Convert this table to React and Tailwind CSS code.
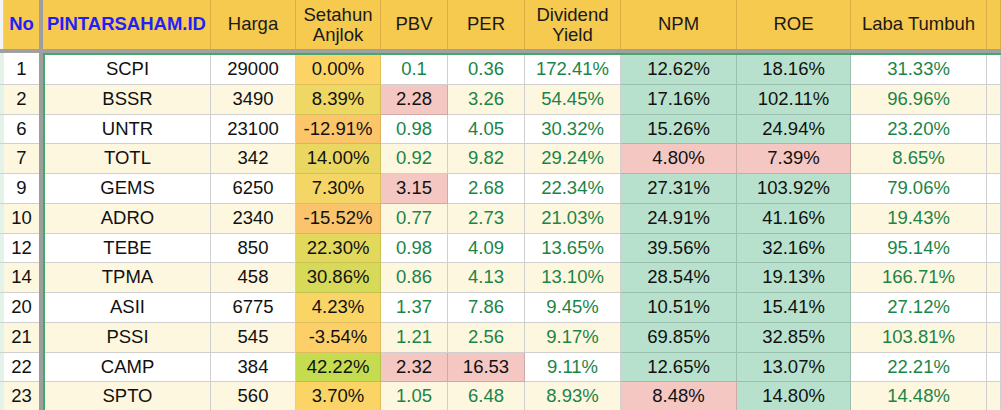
import React from 'react';

const rows = [
  { no: 1, code: 'SCPI', harga: '29000', anjlok: '0.00%', anjlokBg: 'bg-[#fcd466]', pbv: '0.1', per: '0.36', dy: '172.41%', npm: '12.62%', roe: '18.16%', laba: '31.33%' },
  { no: 2, code: 'BSSR', harga: '3490', anjlok: '8.39%', anjlokBg: 'bg-[#efd763]', pbv: '2.28', pbvBad: true, per: '3.26', dy: '54.45%', npm: '17.16%', roe: '102.11%', laba: '96.96%' },
  { no: 6, code: 'UNTR', harga: '23100', anjlok: '-12.91%', anjlokBg: 'bg-[#fbc66a]', pbv: '0.98', per: '4.05', dy: '30.32%', npm: '15.26%', roe: '24.94%', laba: '23.20%' },
  { no: 7, code: 'TOTL', harga: '342', anjlok: '14.00%', anjlokBg: 'bg-[#ead762]', pbv: '0.92', per: '9.82', dy: '29.24%', npm: '4.80%', npmBad: true, roe: '7.39%', roeBad: true, laba: '8.65%' },
  { no: 9, code: 'GEMS', harga: '6250', anjlok: '7.30%', anjlokBg: 'bg-[#f3d665]', pbv: '3.15', pbvBad: true, per: '2.68', dy: '22.34%', npm: '27.31%', roe: '103.92%', laba: '79.06%' },
  { no: 10, code: 'ADRO', harga: '2340', anjlok: '-15.52%', anjlokBg: 'bg-[#f9c46c]', pbv: '0.77', per: '2.73', dy: '21.03%', npm: '24.91%', roe: '41.16%', laba: '19.43%' },
  { no: 12, code: 'TEBE', harga: '850', anjlok: '22.30%', anjlokBg: 'bg-[#e2d85c]', pbv: '0.98', per: '4.09', dy: '13.65%', npm: '39.56%', roe: '32.16%', laba: '95.14%' },
  { no: 14, code: 'TPMA', harga: '458', anjlok: '30.86%', anjlokBg: 'bg-[#d7d958]', pbv: '0.86', per: '4.13', dy: '13.10%', npm: '28.54%', roe: '19.13%', laba: '166.71%' },
  { no: 20, code: 'ASII', harga: '6775', anjlok: '4.23%', anjlokBg: 'bg-[#f9d566]', pbv: '1.37', per: '7.86', dy: '9.45%', npm: '10.51%', roe: '15.41%', laba: '27.12%' },
  { no: 21, code: 'PSSI', harga: '545', anjlok: '-3.54%', anjlokBg: 'bg-[#fccf68]', pbv: '1.21', per: '2.56', dy: '9.17%', npm: '69.85%', roe: '32.85%', laba: '103.81%' },
  { no: 22, code: 'CAMP', harga: '384', anjlok: '42.22%', anjlokBg: 'bg-[#c6dc50]', pbv: '2.32', pbvBad: true, per: '16.53', perBad: true, dy: '9.11%', npm: '12.65%', roe: '13.07%', laba: '22.21%' },
  { no: 23, code: 'SPTO', harga: '560', anjlok: '3.70%', anjlokBg: 'bg-[#fad566]', pbv: '1.05', per: '6.48', dy: '8.93%', npm: '8.48%', npmBad: true, roe: '14.80%', laba: '14.48%' },
];

const headers = [
  { label: 'PINTARSAHAM.ID', w: 'w-[168px]', blue: true },
  { label: 'Harga', w: 'w-[85px]' },
  { label: ['Setahun', 'Anjlok'], w: 'w-[85px]' },
  { label: 'PBV', w: 'w-[67px]' },
  { label: 'PER', w: 'w-[77px]' },
  { label: ['Dividend', 'Yield'], w: 'w-[96px]' },
  { label: 'NPM', w: 'w-[116px]' },
  { label: 'ROE', w: 'w-[114px]' },
  { label: 'Laba Tumbuh', w: 'w-[136px]' },
  { label: '', w: 'flex-1' },
];

const GREEN = 'text-[#1b8447]';
const PINK = 'bg-[#f4c7c3] border-black/15';
const MINT = 'bg-[#b7e1cd] border-black/15';

function Cell({ w, bg, color = 'text-[#111]', children, h = 'h-[29.75px]' }) {
  return (
    <div className={`${w} ${h} shrink-0 flex items-center justify-center border-r border-b whitespace-nowrap ${bg} ${color}`}>
      {children}
    </div>
  );
}

export default function App() {
  return (
    <div
      className="w-[1001px] h-[410px] overflow-hidden bg-white text-[18.5px] leading-none"
      style={{ fontFamily: '"Liberation Sans", Arial, sans-serif' }}
    >
      {/* header row */}
      <div className="flex h-[49px]">
        <div className="w-[4px] bg-[#f3f3f3] border-r border-[#d0d0d0]" />
        <div className="w-[35px] bg-[#f6c94f] flex items-center justify-center font-bold text-[#1f1fff]">No</div>
        <div className="w-[4px] bg-[#9e9e9e]" />
        {headers.map((h, i) => (
          <div
            key={i}
            className={`${h.w} shrink-0 bg-[#f6c94f] border-r border-[#d9ae44] flex flex-col items-center justify-center text-center whitespace-nowrap ${
              h.blue ? 'font-bold text-[#1f1fff]' : 'text-[#1a1a1a]'
            }`}
          >
            {Array.isArray(h.label) ? (
              <>
                <span className="leading-[20px]">{h.label[0]}</span>
                <span className="leading-[20px]">{h.label[1]}</span>
              </>
            ) : (
              h.label
            )}
          </div>
        ))}
      </div>
      <div className="h-[4px] bg-[#a0a0a0]" />

      {/* body */}
      <div className="flex">
        <div className="w-[4px] shrink-0 flex flex-col">
          {rows.map((r, i) => (
            <div
              key={r.no}
              className={`${i === 0 ? 'h-[31.75px]' : 'h-[29.75px]'} bg-[#e4f3ea] border-b border-[#c7d8cd]`}
            />
          ))}
        </div>
        <div className="w-[35px] shrink-0 flex flex-col">
          {rows.map((r, i) => (
            <div
              key={r.no}
              className={`${i === 0 ? 'h-[31.75px] pt-[2px]' : 'h-[29.75px]'} flex items-center justify-center border-b border-[#cfcfcf] text-[#111] ${
                i % 2 ? 'bg-[#fef7e0]' : 'bg-white'
              }`}
            >
              {r.no}
            </div>
          ))}
        </div>
        <div className="w-[4px] shrink-0 bg-[#9e9e9e]" />
        <div className="flex-1 flex flex-col border-t-2 border-l-2 border-[#43a86d]">
          {rows.map((r, i) => {
            const base = i % 2 ? 'bg-[#fef7e0] border-[#cfcfcf]' : 'bg-white border-[#cfcfcf]';
            return (
              <div key={r.no} className="flex">
                <Cell w="w-[166px]" bg={base}>{r.code}</Cell>
                <Cell w="w-[85px]" bg={base}>{r.harga}</Cell>
                <Cell w="w-[85px]" bg={`${r.anjlokBg} border-black/10`}>{r.anjlok}</Cell>
                <Cell w="w-[67px]" bg={r.pbvBad ? PINK : base} color={r.pbvBad ? 'text-[#111]' : GREEN}>{r.pbv}</Cell>
                <Cell w="w-[77px]" bg={r.perBad ? PINK : base} color={r.perBad ? 'text-[#111]' : GREEN}>{r.per}</Cell>
                <Cell w="w-[96px]" bg={base} color={GREEN}>{r.dy}</Cell>
                <Cell w="w-[116px]" bg={r.npmBad ? PINK : MINT}>{r.npm}</Cell>
                <Cell w="w-[114px]" bg={r.roeBad ? PINK : MINT}>{r.roe}</Cell>
                <Cell w="w-[136px]" bg={base} color={GREEN}>{r.laba}</Cell>
                <Cell w="flex-1" bg={base} />
              </div>
            );
          })}
        </div>
      </div>
    </div>
  );
}
